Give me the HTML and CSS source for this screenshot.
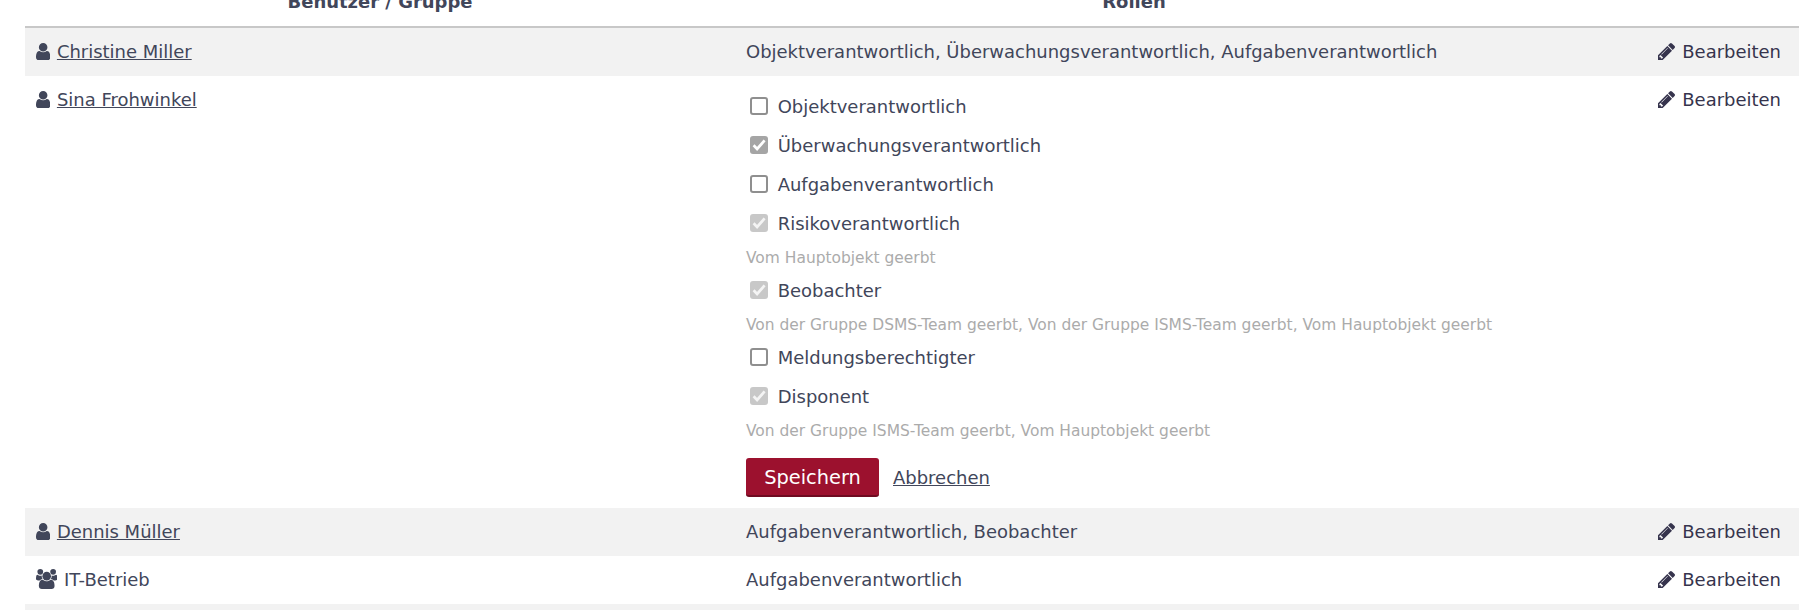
FILE: index.html
```
<!DOCTYPE html>
<html lang="de">
<head>
<meta charset="utf-8">
<title>Benutzer und Rollen</title>
<link rel="stylesheet" href="styles.css">
</head>
<body>
<svg class="sprite" aria-hidden="true">
  <symbol id="user" viewBox="256 128 1280 1536"><path d="M1536 1399q0 109-62.5 187t-150.5 78h-854q-88 0-150.5-78t-62.5-187q0-85 8.5-160.5t31.5-152 58.5-131 94-89 134.5-34.5q131 128 313 128t313-128q76 0 134.5 34.5t94 89 58.5 131 31.5 152 8.5 160.5zm-256-887q0 159-112.5 271.5t-271.5 112.5-271.5-112.5-112.5-271.5 112.5-271.5 271.5-112.5 271.5 112.5 112.5 271.5z"/></symbol>
  <symbol id="users" viewBox="-64 0 1920 1792"><path d="M529 896q-162 5-265 128h-134q-82 0-138-40.5t-56-118.5q0-353 124-353 6 0 43.5 21t97.5 42.5 119 21.5q67 0 133-23-5 37-5 66 0 142 80 256zm1071 637q0 120-73 189.5t-194 69.5h-874q-121 0-194-69.5t-73-189.5q0-53 3.5-103.5t14-109 26.5-108.5 43-97.5 62-81 85.5-53.5 111.5-20q10 0 43 21.5t73 48 107 48 135 21.5 135-21.5 107-48 73-48 43-21.5q61 0 111.5 20t85.5 53.5 62 81 43 97.5 26.5 108.5 14 109 3.5 103.5z"/><circle cx="320" cy="256" r="256"/><circle cx="896" cy="640" r="384"/><circle cx="1472" cy="256" r="256"/><path d="M1856 865q0 78-56 118.5t-138 40.5h-134q-103-123-265-128 80-114 80-256 0-29-5-66 66 23 133 23 59 0 119-21.5t97.5-42.5 43.5-21q124 0 124 353z"/></symbol>
  <symbol id="pencil" viewBox="128 149 1515 1515"><path d="M491 1536l91-91-235-235-91 91v107h128v128h107zm523-928q0-22-22-22-10 0-17 7l-542 542q-7 7-7 17 0 22 22 22 10 0 17-7l542-542q7-7 7-17zm-54-192l416 416-832 832h-416v-416zm683 96q0 53-37 90l-166 166-416-416 166-165q36-38 90-38 53 0 91 38l235 234q37 39 37 91z"/></symbol>
  <symbol id="check" viewBox="0 0 18 18"><path d="M3.6 9.3l3.5 3.7 7.5-8.6" fill="none" stroke="currentColor" stroke-width="2.7"/></symbol>
</svg>
<main class="table">
  <div class="row head"><div class="cell">Benutzer / Gruppe</div><div class="cell">Rollen</div><div class="cell"></div></div>
  <div class="row odd">
    <div class="cell"><svg class="icon-user"><use href="#user"/></svg><a class="link">Christine Miller</a></div>
    <div class="cell">Objektverantwortlich, Überwachungsverantwortlich, Aufgabenverantwortlich</div>
    <div class="cell edit"><svg class="icon-pencil"><use href="#pencil"/></svg>Bearbeiten</div>
  </div>
  <div class="row">
    <div class="cell"><svg class="icon-user"><use href="#user"/></svg><a class="link">Sina Frohwinkel</a></div>
    <div class="cell form">
      <label class="option"><span class="box"></span>Objektverantwortlich</label>
      <label class="option"><span class="box checked"><svg><use href="#check"/></svg></span>Überwachungsverantwortlich</label>
      <label class="option"><span class="box"></span>Aufgabenverantwortlich</label>
      <label class="option"><span class="box checked disabled"><svg><use href="#check"/></svg></span>Risikoverantwortlich</label>
      <p class="hint">Vom Hauptobjekt geerbt</p>
      <label class="option"><span class="box checked disabled"><svg><use href="#check"/></svg></span>Beobachter</label>
      <p class="hint">Von der Gruppe DSMS-Team geerbt, Von der Gruppe ISMS-Team geerbt, Vom Hauptobjekt geerbt</p>
      <label class="option"><span class="box"></span>Meldungsberechtigter</label>
      <label class="option"><span class="box checked disabled"><svg><use href="#check"/></svg></span>Disponent</label>
      <p class="hint">Von der Gruppe ISMS-Team geerbt, Vom Hauptobjekt geerbt</p>
      <div class="actions"><button class="save">Speichern</button><a class="link">Abbrechen</a></div>
    </div>
    <div class="cell edit"><svg class="icon-pencil"><use href="#pencil"/></svg>Bearbeiten</div>
  </div>
  <div class="row odd">
    <div class="cell"><svg class="icon-user"><use href="#user"/></svg><a class="link">Dennis Müller</a></div>
    <div class="cell">Aufgabenverantwortlich, Beobachter</div>
    <div class="cell edit"><svg class="icon-pencil"><use href="#pencil"/></svg>Bearbeiten</div>
  </div>
  <div class="row">
    <div class="cell"><svg class="icon-users"><use href="#users"/></svg><span>IT-Betrieb</span></div>
    <div class="cell">Aufgabenverantwortlich</div>
    <div class="cell edit"><svg class="icon-pencil"><use href="#pencil"/></svg>Bearbeiten</div>
  </div>
  <div class="row odd last"></div>
</main>
</body>
</html>
```
FILE: styles.css
```
* { box-sizing: border-box; }
body {
  margin: 0;
  background: #fff;
  color: #41465a;
  font: 17.98px/26px "DejaVu Sans", sans-serif;
}
svg { fill: currentColor; flex: none; }
.sprite { display: none; }
.table { height: 630px; padding: 0 21px 0 25px; margin-top: -20px; }
.row {
  display: grid;
  grid-template-columns: 710px 798px 1fr;
  min-height: 48px;
}
.odd { background: #f2f2f2; }
.last { min-height: 6px; }
.cell { display: flex; align-items: center; height: 48px; padding: 0 11px; white-space: nowrap; }
.head { border-bottom: 2px solid #c8c8c8; font-weight: bold; }
.head .cell { justify-content: center; height: 46px; padding-bottom: 3px; }
.edit { justify-content: flex-end; padding-right: 18px; color: #36344d; }
.icon-user { width: 14.3px; height: 17.2px; margin: -1px 6.6px 0 0; }
.icon-users { width: 21.4px; height: 20px; margin: -2px 6.6px 0 0; }
.icon-pencil { width: 17px; height: 17px; margin: -1px 7px 0 0; }
.link { text-decoration: underline; }
.form { display: block; height: 432px; padding-top: 11px; }
.option { display: flex; align-items: center; height: 39px; }
.box {
  display: block;
  align-self: flex-start;
  width: 18px;
  height: 18px;
  margin: 10px 9.7px 0 4px;
  border: 2px solid #8f8f8f;
  border-radius: 3px;
}
.box svg { display: block; width: 18px; height: 18px; }
.checked { border: 0; background: #a5a5a5; color: #fff; }
.disabled { background: #c8c8c8; color: #f4f4f4; }
.hint { height: 28px; margin: 0; color: #ababab; font-size: 15.46px; line-height: 30px; }
.actions { display: flex; align-items: center; gap: 14px; padding-top: 14px; }
.save {
  width: 133px;
  height: 39px;
  padding: 2px 0 0;
  border: 0;
  border-bottom: 2px solid #6f0b21;
  border-radius: 3px;
  background: #9c112e;
  color: #fff;
  font: 19.4px "DejaVu Sans", sans-serif;
}
```
